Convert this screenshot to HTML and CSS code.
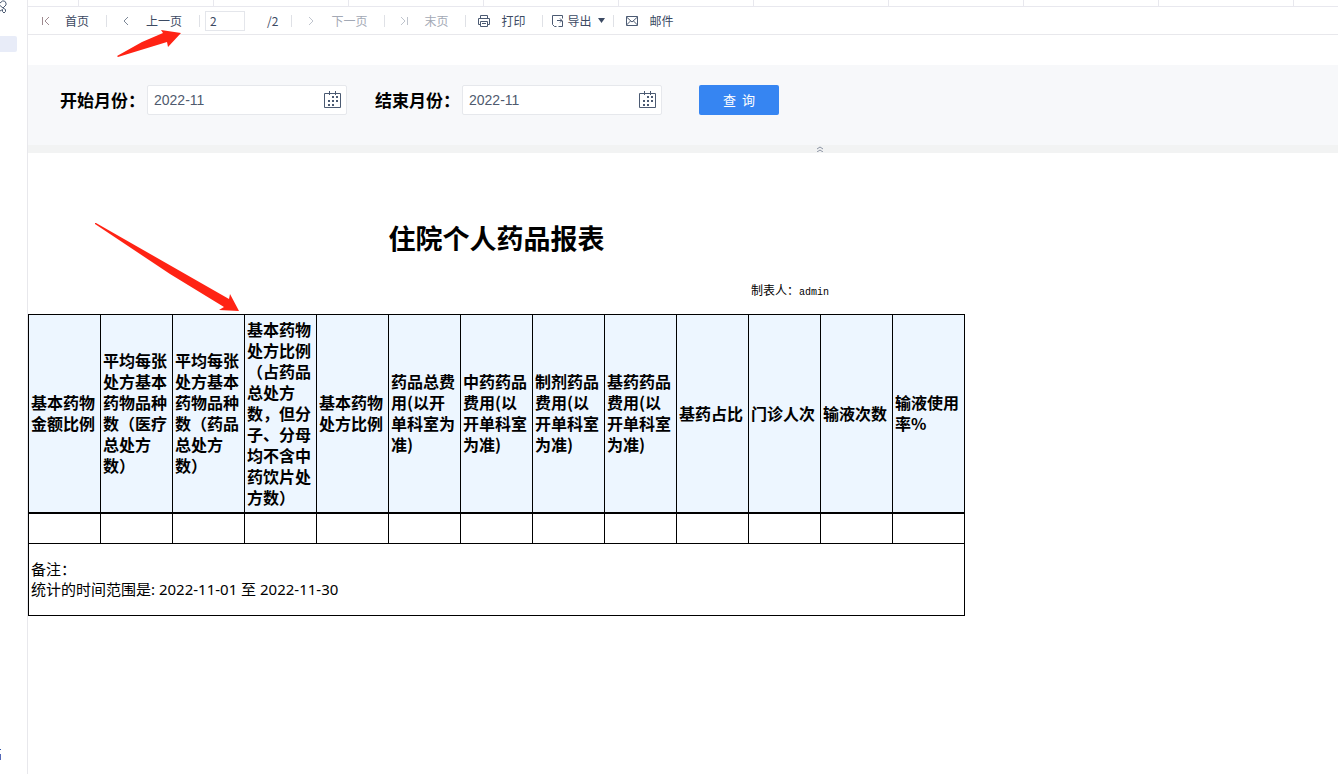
FILE: index.html
```html
<!DOCTYPE html>
<html lang="zh-CN">
<head>
    <meta charset="UTF-8">
    <meta name="viewport" content="width=device-width, initial-scale=1.0">
    <title>住院个人药品报表</title>
    <link rel="stylesheet" href="styles.css">
</head>
<body>
<aside class="sidebar">
    <svg class="side-icon" width="7" height="14" viewBox="0 0 7 14"><path d="M0 3l2.500-2h2l1.500 2v2L3 8 0 5.500M3 8l2.500 1.500v2L4 13 2.500 11.500v-2L0 11" /></svg>
    <div class="side-active"></div>
    <div class="side-more"></div>
</aside>

<main class="main">
    <div class="tabs">
        <span class="tab tab-first"></span>
        <span class="tab"></span>
        <span class="tab"></span>
        <span class="tab"></span>
        <span class="tab"></span>
        <span class="tab"></span>
        <span class="tab"></span>
        <span class="tab"></span>
        <span class="tab"></span>
        <span class="tab"></span>
    </div>

    <!-- 工具栏 -->
    <div class="toolbar">
        <button class="tool" type="button">
            <svg class="icon first" viewBox="0 0 16 16"><path d="M5.500 4v8M12 4L8 8l4 4" /></svg>
            首页
        </button>
        <button class="tool" type="button">
            <svg class="icon light" viewBox="0 0 16 16"><path d="M10 4L6 8l4 4" /></svg>
            上一页
        </button>
        <div class="pager">
            <input class="page-input" type="text" value="2" aria-label="页码">
            <span class="page-total">/2</span>
        </div>
        <button class="tool" type="button" disabled>
            <svg class="icon" viewBox="0 0 16 16"><path d="M6 4l4 4-4 4" /></svg>
            下一页
        </button>
        <button class="tool" type="button" disabled>
            <svg class="icon" viewBox="0 0 16 16"><path d="M5 4l4 4-4 4M11.500 4v8" /></svg>
            末页
        </button>
        <button class="tool tool-action" type="button">
            <svg class="icon" viewBox="0 0 16 16"><path d="M4.500 5.500v-3h7v3M4.500 11.500h-2v-6h11v6h-2M4.500 8.500h7v5h-7zM6 10.500h4" /></svg>
            打印
        </button>
        <button class="tool tool-export" type="button">
            <svg class="icon" viewBox="0 0 16 16"><path d="M12.500 5.500v-3h-10v9l2 2h2M12.500 8v5.500h-4M7 7.500h5M10 5.500l2 2-2 2" /></svg>
            导出
            <svg class="caret" viewBox="0 0 7 5"><path d="M0 0h7L3.500 5z" /></svg>
        </button>
        <button class="tool tool-action" type="button">
            <svg class="icon" viewBox="0 0 16 16"><path d="M2.500 3.500h11v9h-11zM2.500 4l5.500 5 5.500-5M2.500 12l4-4M13.500 12l-4-4" /></svg>
            邮件
        </button>
    </div>

    <!-- 查询条件 -->
    <form class="query">
        <label class="query-label" for="startMonth">开始月份：</label>
        <div class="date-box">
            <input id="startMonth" type="text" value="2022-11">
            <svg class="calendar" viewBox="0 0 18 18"><path class="frame" d="M.5 2.500h16v14H.5zM5.500 0v4M11.500 0v4" /><path class="dots" d="M8 5h2v2H8zM12 5h2v2h-2zM4 9h2v2H4zM8 9h2v2H8zM12 9h2v2h-2zM4 13h2v2H4zM8 13h2v2H8z" /></svg>
        </div>
        <label class="query-label" for="endMonth">结束月份：</label>
        <div class="date-box">
            <input id="endMonth" type="text" value="2022-11">
            <svg class="calendar" viewBox="0 0 18 18"><path class="frame" d="M.5 2.500h16v14H.5zM5.500 0v4M11.500 0v4" /><path class="dots" d="M8 5h2v2H8zM12 5h2v2h-2zM4 9h2v2H4zM8 9h2v2H8zM12 9h2v2h-2zM4 13h2v2H4zM8 13h2v2H8z" /></svg>
        </div>
        <button class="btn" type="button">查&nbsp; 询</button>
    </form>
    <div class="fold">
        <svg width="8" height="6" viewBox="0 0 8 6"><path d="M1 3l3-2 3 2M1 6l3-2 3 2" /></svg>
    </div>

    <!-- 报表 -->
    <section class="report">
        <h1>住院个人药品报表</h1>
        <p class="author">制表人：<span class="user">admin</span></p>
        <table>
            <thead>
            <tr>
                <th>基本药物金额比例</th>
                <th>平均每张处方基本药物品种数（医疗总处方数）</th>
                <th>平均每张处方基本药物品种数（药品总处方数）</th>
                <th>基本药物处方比例（占药品总处方数，但分子、分母均不含中药饮片处方数）</th>
                <th>基本药物处方比例</th>
                <th>药品总费用(以开单科室为准)</th>
                <th>中药药品费用(以开单科室为准)</th>
                <th>制剂药品费用(以开单科室为准)</th>
                <th>基药药品费用(以开单科室为准)</th>
                <th>基药占比</th>
                <th>门诊人次</th>
                <th>输液次数</th>
                <th>输液使用率%</th>
            </tr>
            </thead>
            <tbody>
            <tr class="empty-row">
                <td></td><td></td><td></td><td></td><td></td><td></td><td></td>
                <td></td><td></td><td></td><td></td><td></td><td></td>
            </tr>
            <tr class="remark">
                <td colspan="13">备注：<br>统计的时间范围是: 2022-11-01 至 2022-11-30</td>
            </tr>
            </tbody>
        </table>
    </section>
</main>

<!-- 标注箭头 -->
<svg class="arrow arrow-page" viewBox="0 0 66 30"><path d="M0 28L25 14 46 5l-2-3 20 3-13 14-1-5L1 29z" /></svg>
<svg class="arrow arrow-column" viewBox="0 0 146 90"><path d="M0 0h1l133 76 1-5 9 17-20-1 5-3L75 51 0 1z" /></svg>
</body>
</html>
```

FILE: styles.css
```css
* {
    box-sizing: border-box;
}
body {
    margin: 0;
    min-height: 100vh;
    display: flex;
    position: relative;
    background-color: #fff;
    color: #000;
    font-family: "Noto Sans CJK SC", sans-serif;
}
svg {
    fill: none;
    stroke: #4b5a72;
}
.sidebar {
    display: flex;
    flex-direction: column;
    flex: none;
    width: 28px;
    padding-bottom: 14px;
    border-right: 1px solid #e8e8ec;
}
.side-icon {
    display: block;
}
.side-active {
    width: 17px;
    height: 16px;
    margin-top: 22px;
    background-color: #e8ecf8;
    border-radius: 0 2px 2px 0;
}
.side-more {
    width: 1px;
    height: 11px;
    margin-top: auto;
    border-top: 1px solid #2f56a8;
    border-bottom: 6px solid #5468b8;
}
.main {
    flex: 1;
    min-width: 0;
}
.tabs {
    display: flex;
    height: 7px;
    overflow: hidden;
    border-bottom: 1px solid #e8e8ee;
}
.tab {
    flex: none;
    width: 135px;
    border-right: 1px solid #e8e8ee;
}
.tab-first {
    width: 51px;
}

/* 工具栏 */
.toolbar {
    display: flex;
    align-items: center;
    height: 28px;
    border-bottom: 1px solid #e8e8ec;
}
.tool,
.pager {
    display: flex;
    align-items: center;
    position: relative;
    color: #3c4a63;
    font-size: 12px;
    line-height: 20px;
}
.tool {
    flex: none;
    gap: 12px;
    padding: 0 18px 0 11px;
    border: none;
    background: none;
    font-family: inherit;
    cursor: pointer;
}
.tool:first-child {
    padding-left: 9px;
}
.tool:not(:last-child)::after,
.pager::after {
    content: "";
    position: absolute;
    top: 4px;
    right: 0;
    width: 1px;
    height: 12px;
    background-color: #dfe1e6;
}
.tool:disabled {
    color: #a3a9b5;
    cursor: default;
}
.tool:disabled svg {
    stroke: #bfc4cd;
}
.tool-action {
    gap: 9px;
    padding-left: 10px;
}
.tool-export {
    gap: 1px;
    padding: 0 9px 0 7px;
}
.icon {
    width: 16px;
    height: 16px;
}
.light {
    stroke: #7c8797;
}
.first {
    stroke: #a08b90;
}
.caret {
    width: 7px;
    height: 5px;
    margin-left: 6px;
    fill: #3c4a63;
    stroke: none;
}
.pager {
    padding: 0 14px 0 5px;
    gap: 22px;
}
.page-input {
    width: 40px;
    height: 20px;
    padding: 0 4px;
    border: 1px solid #e4e6eb;
    color: #3c4a63;
    font-family: inherit;
    font-size: 12px;
}

/* 查询条件 */
.query {
    display: flex;
    align-items: center;
    height: 80px;
    margin-top: 30px;
    padding: 0 32px 10px;
    background-color: #f7f8fa;
}
.query-label {
    width: 87px;
    font-size: 17px;
    line-height: 24px;
    font-weight: bold;
    white-space: nowrap;
}
.date-box {
    display: flex;
    align-items: center;
    width: 200px;
    height: 30px;
    margin-right: 28px;
    padding: 0 4px 0 6px;
    background-color: #fff;
    border: 1px solid #e6e8ec;
    border-radius: 2px;
}
.date-box input {
    flex: 1;
    min-width: 0;
    padding: 0;
    border: none;
    outline: none;
    color: #4f5a6e;
    font-family: "Liberation Sans", sans-serif;
    font-size: 14px;
}
.calendar {
    width: 18px;
    height: 18px;
}
.calendar .dots {
    fill: #4b5a72;
    stroke: none;
}
.btn {
    width: 80px;
    height: 30px;
    margin-left: 9px;
    padding: 0 0 2px;
    border: none;
    border-radius: 2px;
    background-color: #3685f2;
    color: #fff;
    font-family: inherit;
    font-size: 13px;
    cursor: pointer;
}
.fold {
    display: flex;
    align-items: center;
    justify-content: center;
    height: 8px;
    padding-left: 274px;
    background-color: #f2f3f3;
}
.fold svg {
    stroke: #8b93a3;
}

/* 报表 */
.report {
    width: 937px;
    padding-top: 65px;
}
h1 {
    margin: 0;
    font-size: 27px;
    line-height: 40px;
    text-align: center;
}
.author {
    margin: 22px 136px 14px;
    font-size: 12px;
    line-height: 20px;
    text-align: right;
}
.user {
    font-family: "Liberation Mono", monospace;
    font-size: 10px;
    line-height: 12px;
}
table {
    width: 100%;
    table-layout: fixed;
    border-collapse: collapse;
}
th,
td {
    padding: 0 2px;
    border: 1px solid #000;
    text-align: left;
    vertical-align: middle;
}
th {
    height: 198px;
    border-bottom-width: 2px;
    background-color: #edf6ff;
    font-size: 16px;
    line-height: 21px;
}
.empty-row td {
    height: 31px;
}
.remark td {
    height: 72px;
    padding-bottom: 2px;
    font-family: "Noto Sans", "Noto Sans CJK SC", sans-serif;
    font-size: 15px;
    line-height: 20px;
}

/* 标注箭头 */
.arrow {
    position: absolute;
    fill: #ff2314;
    stroke: none;
}
.arrow-page {
    left: 117px;
    top: 28px;
    width: 66px;
    height: 30px;
}
.arrow-column {
    left: 95px;
    top: 223px;
    width: 146px;
    height: 90px;
}
```
